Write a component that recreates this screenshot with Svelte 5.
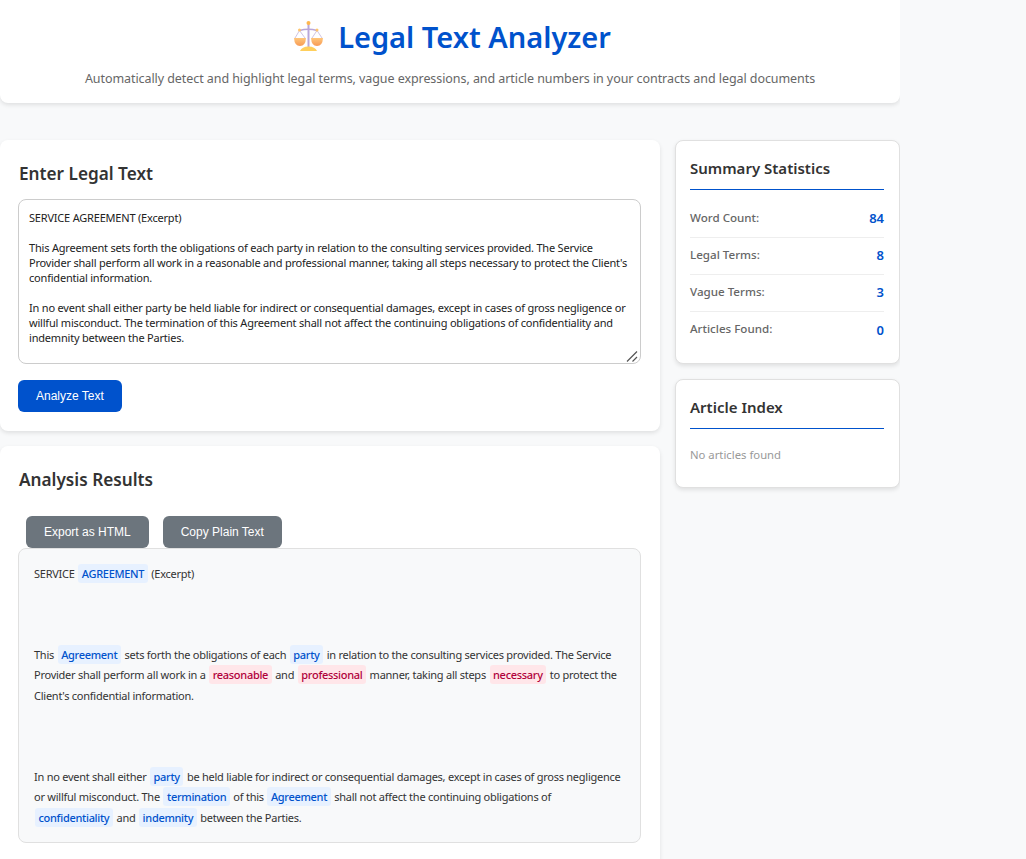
<script lang="ts">
	const stats = [
		{ label: 'Word Count:', value: 84 },
		{ label: 'Legal Terms:', value: 8 },
		{ label: 'Vague Terms:', value: 3 },
		{ label: 'Articles Found:', value: 0 }
	];

	let text = `SERVICE AGREEMENT (Excerpt)

This Agreement sets forth the obligations of each party in relation to the consulting services provided. The Service Provider shall perform all work in a reasonable and professional manner, taking all steps necessary to protect the Client's confidential information.

In no event shall either party be held liable for indirect or consequential damages, except in cases of gross negligence or willful misconduct. The termination of this Agreement shall not affect the continuing obligations of confidentiality and indemnity between the Parties.`;
</script>

<div class="page">
	<header class="header">
		<h1>
			<svg class="scales" width="30" height="30" viewBox="0 0 30 30" aria-hidden="true">
				<defs>
					<linearGradient id="pan" x1="0" y1="0" x2="0" y2="1">
						<stop offset="0" stop-color="#ffc67a" />
						<stop offset="1" stop-color="#f79a55" />
					</linearGradient>
				</defs>
				<path d="M14.500 3V26" stroke="#b9a6d8" stroke-width="2" />
				<path d="M5.500 9.500Q14.500 7 23 9.500" stroke="#b9a6d8" stroke-width="1.500" fill="none" />
				<path d="M5.500 9.500L1 17M5.500 9.500L11 17M23 9.500L18 17M23 9.500L28 17" stroke="#c4b5dc" stroke-width="0.800" fill="none" />
				<circle cx="14.500" cy="2" r="2" fill="#ffb74d" />
				<circle cx="5.500" cy="9" r="1.500" fill="#ffc56b" />
				<circle cx="23" cy="9" r="1.500" fill="#ffc56b" />
				<path d="M0 17H12Q11.500 25 6 25T0 17Z" fill="url(#pan)" />
				<path d="M17 17H29Q28.500 25 23 25T17 17Z" fill="url(#pan)" />
				<path d="M6 30Q8 25.500 14.500 25.500T23 30Z" fill="#ffcf5c" />
			</svg>
			<span>Legal Text Analyzer</span>
		</h1>
		<p>Automatically detect and highlight legal terms, vague expressions, and article numbers in your contracts and legal documents</p>
	</header>

	<div class="columns">
		<main class="main">
			<section class="card">
				<h2>Enter Legal Text</h2>
				<div class="field">
					<textarea bind:value={text} spellcheck="false"></textarea>
					<svg class="grip" width="12" height="12" viewBox="0 0 12 12" aria-hidden="true">
						<path d="M1 11.500L11 1.500M6.500 11.500L11 7" stroke="#555" stroke-width="1.200" fill="none" />
					</svg>
				</div>
				<button class="btn primary">Analyze Text</button>
			</section>

			<section class="card results">
				<h2>Analysis Results</h2>
				<div class="actions">
					<button class="btn secondary">Export as HTML</button>
					<button class="btn secondary">Copy Plain Text</button>
				</div>
				<div class="output">
					<p>SERVICE <mark>AGREEMENT</mark> (Excerpt)</p>
					<p>This <mark>Agreement</mark> sets forth the obligations of each <mark>party</mark> in relation to the consulting services provided. The Service Provider shall perform all work in a <mark class="vague">reasonable</mark> and <mark class="vague">professional</mark> manner, taking all steps <mark class="vague">necessary</mark> to protect the Client's confidential information.</p>
					<p>In no event shall either <mark>party</mark> be held liable for indirect or consequential damages, except in cases of gross negligence or willful misconduct. The <mark>termination</mark> of this <mark>Agreement</mark> shall not affect the continuing obligations of <mark>confidentiality</mark> and <mark>indemnity</mark> between the Parties.</p>
				</div>
			</section>
		</main>

		<aside class="side">
			<section class="panel">
				<h3>Summary Statistics</h3>
				<ul>
					{#each stats as stat}
						<li><span class="label">{stat.label}</span><span class="value">{stat.value}</span></li>
					{/each}
				</ul>
			</section>
			<section class="panel index">
				<h3>Article Index</h3>
				<p class="empty">No articles found</p>
			</section>
		</aside>
	</div>
</div>

<style>
	:global(body) {
		background: #f8f9fa;
		font-family: "Noto Sans", "Open Sans", sans-serif;
		color: #333;
	}

	.page {
		width: 900px;
		height: 859px;
		overflow: hidden;
	}

	.header {
		height: 103px;
		box-sizing: border-box;
		padding-top: 14px;
		background: #fff;
		border-radius: 0 0 8px 8px;
		box-shadow: 0 2px 4px rgba(0, 0, 0, 0.1);
		text-align: center;
	}

	h1 {
		margin: 0;
		padding-left: 5px;
		display: flex;
		justify-content: center;
		align-items: center;
		gap: 14px;
		height: 44px;
		font-size: 29px;
		font-weight: 600;
		color: #0052cc;
	}

	.header p {
		margin: 12px 0 0;
		font-size: 12.5px;
		line-height: 17px;
		letter-spacing: -0.07px;
		color: #666;
	}

	.columns {
		display: flex;
		gap: 15px;
		margin-top: 37px;
		align-items: flex-start;
	}

	.main {
		width: 660px;
		display: flex;
		flex-direction: column;
		gap: 15px;
	}

	.card {
		background: #fff;
		border-radius: 8px;
		box-shadow: 0 2px 4px rgba(0, 0, 0, 0.1);
		padding: 23px 19px 19px 18px;
	}

	h2 {
		margin: 0 0 14px 1px;
		font-size: 17.2px;
		line-height: 22px;
		font-weight: 600;
		color: #333;
	}

	.field {
		position: relative;
	}

	textarea {
		display: block;
		width: 100%;
		height: 165px;
		box-sizing: border-box;
		padding: 10px;
		border: 1px solid #ccc;
		border-radius: 8px;
		font: 11px/15px "Noto Sans", sans-serif;
		letter-spacing: -0.2px;
		color: #222;
		resize: none;
		outline: none;
	}

	.grip {
		position: absolute;
		right: 3px;
		bottom: 2px;
		pointer-events: none;
	}

	.btn {
		height: 32px;
		border: 0;
		border-radius: 6px;
		color: #fff;
		font: 500 12px "Liberation Sans", sans-serif;
		padding: 0 18px;
	}

	.primary {
		display: block;
		margin-top: 16px;
		background: #0052cc;
	}

	.secondary {
		background: #6c757d;
	}

	.results {
		padding-bottom: 40px;
	}

	.results h2 {
		margin-bottom: 25px;
	}

	.actions {
		height: 32px;
		padding-left: 8px;
		display: flex;
		gap: 14px;
	}

	.output {
		box-sizing: border-box;
		height: 295px;
		padding: 15px 14px 15px 15px;
		background: #f8f9fa;
		border: 1px solid #e0e0e0;
		border-radius: 8px;
		font-size: 11px;
		line-height: 20.4px;
		letter-spacing: -0.25px;
		color: #333;
	}

	.output p {
		margin: 0 0 60.6px;
	}

	mark {
		background: #e7f1ff;
		color: #0052cc;
		font-weight: 500;
		letter-spacing: -0.3px;
		padding: 2px 3.5px;
		margin: 0 1px;
		border-radius: 3px;
	}

	mark.vague {
		background: #ffe6e9;
		color: #b0003a;
	}

	.side {
		width: 225px;
		display: flex;
		flex-direction: column;
		gap: 15px;
	}

	.panel {
		background: #fff;
		border: 1px solid #e0e0e0;
		border-radius: 8px;
		box-shadow: 0 2px 4px rgba(0, 0, 0, 0.1);
		padding: 14px 15px 14px 14px;
		height: 224px;
		box-sizing: border-box;
	}

	.index {
		height: 109px;
	}

	h3 {
		margin: 0;
		height: 35px;
		box-sizing: border-box;
		border-bottom: 1px solid #0052cc;
		font-size: 15px;
		line-height: 27px;
		font-weight: 600;
		color: #333;
	}

	ul {
		list-style: none;
		margin: 11px 0 0;
		padding: 0;
	}

	li {
		display: flex;
		justify-content: space-between;
		align-items: center;
		height: 37px;
		padding-bottom: 4px;
		box-sizing: border-box;
		border-bottom: 1px solid #eee;
		font-size: 11.6px;
		font-weight: 500;
		color: #666;
	}

	li:last-child {
		border-bottom: 0;
	}

	.value {
		margin-top: 2px;
		font-size: 13px;
		font-weight: 600;
		color: #0052cc;
	}

	.empty {
		margin: 18px 0 0;
		font-size: 11.3px;
		color: #999;
	}
</style>
